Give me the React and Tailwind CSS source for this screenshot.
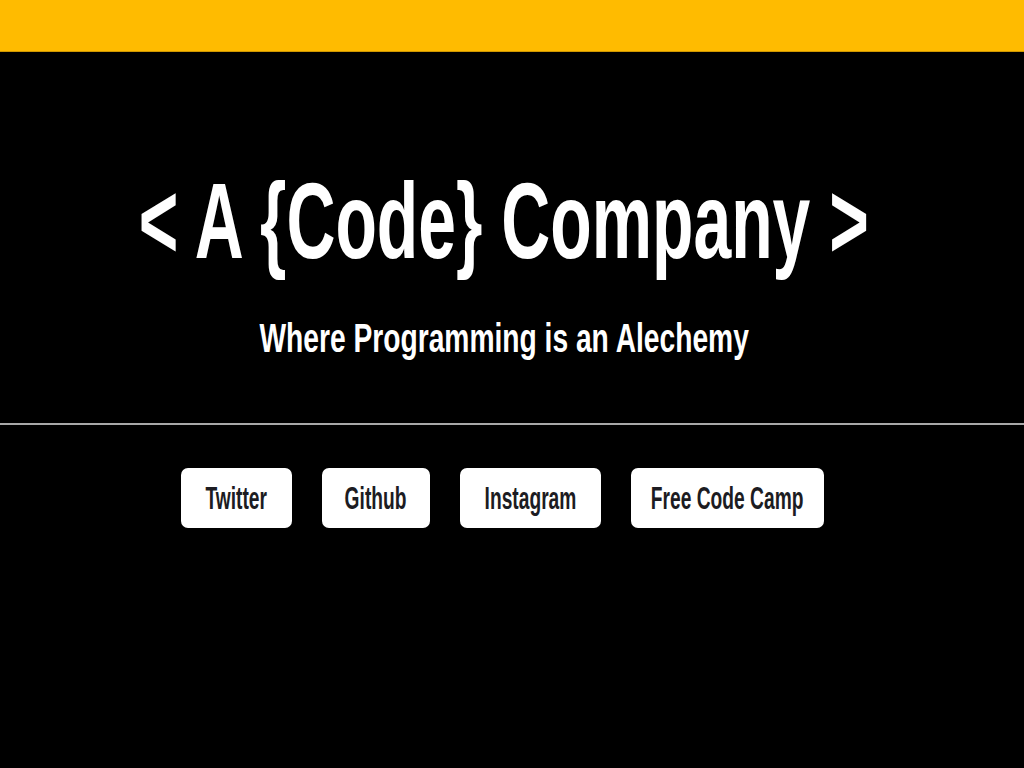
import React from 'react';

const links = [
  { label: 'Twitter', w: 'w-[111px]' },
  { label: 'Github', w: 'w-[108px]' },
  { label: 'Instagram', w: 'w-[141px]' },
  { label: 'Free Code Camp', w: 'w-[193px]' },
];

export default function App() {
  return (
    <div className="min-h-screen bg-black font-['Liberation_Sans',Arial,sans-serif] font-bold text-white">
      {/* top bar */}
      <header className="h-[52px] border-b border-[#cf9700] bg-[#ffbb00]" />

      {/* hero */}
      <section className="flex flex-col items-center pt-[116px] pb-[65px] pr-[16px]">
        <div className="flex w-full justify-center">
          <h1 className="inline-block scale-x-[0.634] whitespace-nowrap text-[107px] leading-none">
            &lt; A {'{Code}'} Company &gt;
          </h1>
        </div>
        <div className="mt-[43px] flex w-full justify-center">
          <p className="inline-block scale-x-[0.705] whitespace-nowrap text-[40px] leading-none">
            Where Programming is an Alechemy
          </p>
        </div>
      </section>

      <hr className="h-[2px] border-0 bg-[#a8a8a8]" />

      {/* links */}
      <nav className="flex justify-center gap-[30px] pt-[43px] pr-[20px]">
        {links.map((l) => (
          <a
            key={l.label}
            href="#"
            className={`flex h-[60px] ${l.w} items-center justify-center rounded-[7px] bg-white text-[32px] leading-none text-[#1c1c22]`}
          >
            <span className="inline-block scale-x-[0.6] whitespace-nowrap">{l.label}</span>
          </a>
        ))}
      </nav>
    </div>
  );
}
